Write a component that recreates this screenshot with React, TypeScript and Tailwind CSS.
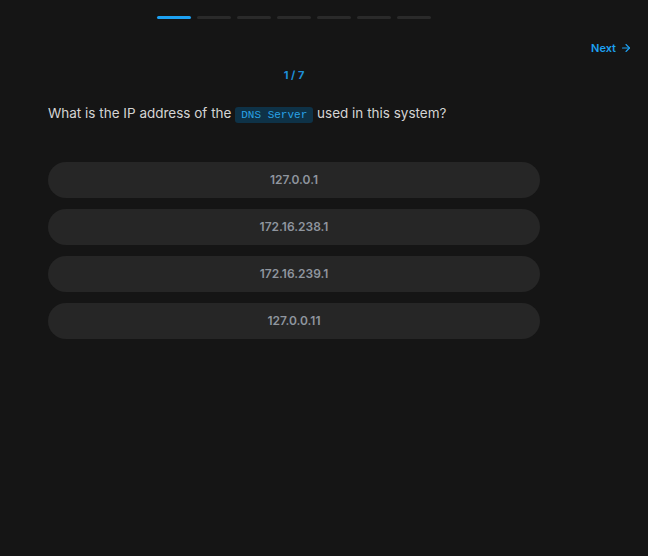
import { ArrowRight } from 'lucide-react'

const options = ['127.0.0.1', '172.16.238.1', '172.16.239.1', '127.0.0.11']

export default function App() {
  const total = 7
  const current = 0

  return (
    <div className="min-h-screen w-full bg-[#151515] font-['Inter','Noto_Sans',sans-serif] text-[#d4d4d4]">
      {/* progress */}
      <div className="pt-4 pl-12">
        <div className="flex w-[492px] justify-center gap-[6px]">
          {Array.from({ length: total }).map((_, i) => (
            <div key={i} className={i === current ? 'h-[3px] w-[34px] rounded-full bg-[#1da1f2]' : 'h-[3px] w-[34px] rounded-full bg-[#2a2a2a]'} />
          ))}
        </div>
      </div>

      <div className="mt-[21px] flex justify-end pr-4">
        <button className="flex items-center gap-1 text-[11px] font-semibold leading-4 text-[#1da1f2]">
          Next <ArrowRight size={12} strokeWidth={2.2} />
        </button>
      </div>

      <div className="pl-12">
        <div className="w-[492px]">
          <div className="mt-[11px] text-center text-[11px] font-bold leading-4 text-[#1d8fd8]">1 / 7</div>

          <p className="mt-5 text-[13.5px] leading-5 text-[#d4d4d4]">
            What is the IP address of the{' '}
            <code className="rounded-[3px] bg-[#0e3247] px-1.5 py-[2px] font-['Liberation_Mono',monospace] text-[11px] text-[#2aa3e6]">DNS Server</code>{' '}
            used in this system?
          </p>

          <div className="mt-[37px] flex flex-col gap-[11px]">
            {options.map(o => (
              <button key={o} className="h-9 w-full rounded-full bg-[#262626] text-[12px] font-semibold text-[#8f959e] hover:bg-[#2e2e2e] transition-colors">
                {o}
              </button>
            ))}
          </div>
        </div>
      </div>
    </div>
  )
}
